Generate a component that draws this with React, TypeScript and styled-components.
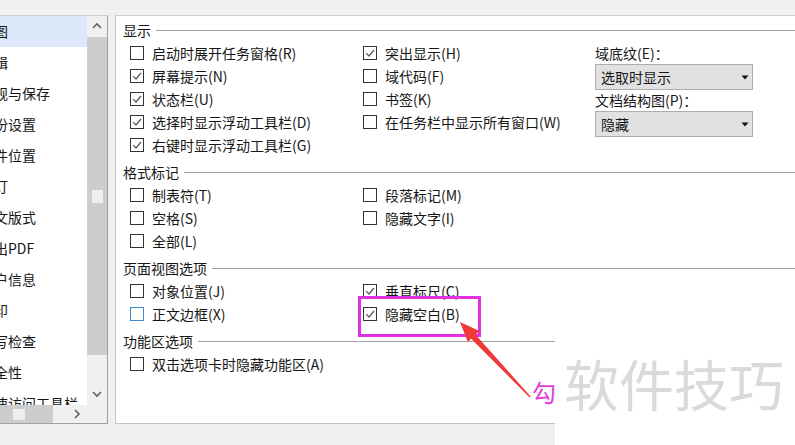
import styled, { createGlobalStyle } from 'styled-components';

const GlobalStyle = createGlobalStyle`
  html, body {
    margin: 0;
    padding: 0;
    background: #f0f0f0;
  }
  body {
    font-family: 'Noto Sans CJK SC', 'Liberation Sans', sans-serif;
  }
`;

const Window = styled.div`
  position: relative;
  box-sizing: border-box;
  width: 795px;
  height: 445px;
  padding-top: 15px;
  overflow: hidden;
  background: #f0f0f0;
  color: #161616;
  font-size: 14px;
`;

const Panes = styled.div`
  display: flex;
  gap: 7px;
  height: 409px;
`;

/* ---------- left navigation list ---------- */

const NavPane = styled.div`
  box-sizing: border-box;
  flex: none;
  width: 108px;
  display: grid;
  grid-template-columns: 87px 20px;
  grid-template-rows: 1fr 18px;
  background: #fff;
  border-top: 1px solid #cfcfcf;
  border-right: 1px solid #a0a0a0;
  border-bottom: 1px solid #a0a0a0;
`;

const NavViewport = styled.div`
  overflow: hidden;
`;

const NavList = styled.div`
  margin-left: -20px;
`;

const NavItem = styled.div<{ $selected?: boolean }>`
  height: 31px;
  line-height: 30px;
  white-space: nowrap;
  background: ${({ $selected }) => ($selected ? '#dde8fa' : 'transparent')};
`;

const VScroll = styled.div`
  display: flex;
  flex-direction: column;
  background: #f0f0f0;
`;

const ScrollBtn = styled.div<{ $wide?: boolean }>`
  flex: none;
  display: flex;
  align-items: center;
  justify-content: center;
  width: ${({ $wide }) => ($wide ? '21px' : 'auto')};
  height: ${({ $wide }) => ($wide ? 'auto' : '21px')};
`;

const VThumb = styled.div`
  flex: none;
  height: 318px;
  display: flex;
  align-items: center;
  justify-content: center;
  background: #cdcdcd;
`;

const Grip = styled.div<{ $w: number; $h: number }>`
  width: ${({ $w }) => $w}px;
  height: ${({ $h }) => $h}px;
  background: #efefef;
`;

const Track = styled.div`
  flex: 1;
`;

const HScroll = styled.div`
  display: flex;
  background: #f0f0f0;
`;

const HThumb = styled.div`
  flex: none;
  width: 53px;
  display: flex;
  align-items: center;
  padding-left: 13px;
  box-sizing: border-box;
  background: #cdcdcd;
`;

const Corner = styled.div`
  background: #f0f0f0;
`;

/* ---------- right options pane ---------- */

const OptionsPane = styled.div`
  flex: 1;
  box-sizing: border-box;
  padding: 4px 0 0 7px;
  background: #fff;
  border-top: 1px solid #cfcfcf;
  border-left: 1px solid #c4c4c4;
  border-bottom: 1px solid #c4c4c4;
`;

const Group = styled.section`
  margin-bottom: 6px;
`;

const GroupHead = styled.div`
  display: flex;
  align-items: center;
  gap: 5px;
  height: 21px;
  line-height: 21px;
`;

const HeadLine = styled.div`
  flex: 1;
  height: 1px;
  background: #a0a0a0;
`;

const GroupBody = styled.div`
  display: grid;
  grid-template-columns: 233px 232px 1fr;
  padding-left: 7px;
`;

const Column = styled.div`
  display: flex;
  flex-direction: column;
`;

const CheckRow = styled.label`
  display: flex;
  align-items: center;
  gap: 8px;
  height: 23px;
  white-space: nowrap;
`;

const Box = styled.span<{ $focus?: boolean }>`
  box-sizing: border-box;
  flex: none;
  width: 14px;
  height: 14px;
  display: flex;
  align-items: center;
  justify-content: center;
  background: #fff;
  border: 1px solid ${({ $focus }) => ($focus ? '#3c8ad4' : '#333')};
`;

const FieldLabel = styled.div`
  height: 21px;
  line-height: 21px;
  white-space: nowrap;
`;

const SideFields = styled.div`
  display: flex;
  flex-direction: column;
  margin-top: 2px;
`;

const Select = styled.div`
  box-sizing: border-box;
  width: 158px;
  height: 26px;
  display: flex;
  align-items: center;
  justify-content: space-between;
  padding: 0 3px 0 5px;
  background: #e1e1e1;
  border: 1px solid #adadad;
`;

/* ---------- annotations over the screenshot ---------- */

const Frame = styled.div`
  position: absolute;
  left: 358px;
  top: 296px;
  width: 123px;
  height: 41px;
  box-sizing: border-box;
  border: 3px solid #e030df;
`;

const ArrowSvg = styled.svg`
  position: absolute;
  left: 0;
  top: 0;
  pointer-events: none;
`;

const WatermarkBox = styled.div`
  position: absolute;
  left: 555px;
  top: 300px;
  right: 0;
  bottom: 0;
  background: #fff;
`;

const Watermark = styled.div`
  position: absolute;
  left: 9px;
  top: 54px;
  font-size: 55px;
  line-height: 56px;
  color: #dadada;
  white-space: nowrap;
`;

const Hook = styled.div`
  position: absolute;
  left: 532px;
  top: 377px;
  font-size: 24px;
  line-height: 30px;
  color: #e23ce0;
`;

const Check = () => (
  <svg width="12" height="12" viewBox="0 0 12 12">
    <path d="M2.2 6.2 L5 9 L10 3" fill="none" stroke="#555" strokeWidth="1.2" />
  </svg>
);

const Chevron = ({ dir }: { dir: 'up' | 'down' | 'right' }) => {
  const d =
    dir === 'up' ? 'M1 6 L5 2 L9 6' : dir === 'down' ? 'M1 2 L5 6 L9 2' : 'M3 1 L7 5 L3 9';
  return (
    <svg width="10" height="10" viewBox="0 0 10 10">
      <path d={d} fill="none" stroke="#606060" strokeWidth="1.6" />
    </svg>
  );
};

const Caret = () => (
  <svg width="8" height="5" viewBox="0 0 8 5">
    <path d="M0.5 0.5 L7.5 0.5 L4 4.5 Z" fill="#111" />
  </svg>
);

type Opt = { label: string; checked?: boolean; focus?: boolean };

function CheckItem({ label, checked, focus }: Opt) {
  return (
    <CheckRow>
      <Box $focus={focus}>{checked && <Check />}</Box>
      {label}
    </CheckRow>
  );
}

const navItems = [
  '视图',
  '编辑',
  '常规与保存',
  '备份设置',
  '文件位置',
  '修订',
  '中文版式',
  '输出PDF',
  '用户信息',
  '打印',
  '拼写检查',
  '安全性',
  '快速访问工具栏',
];

interface GroupDef {
  title: string;
  left: Opt[];
  right: Opt[];
  side?: boolean;
}

const groups: GroupDef[] = [
  {
    title: '显示',
    left: [
      { label: '启动时展开任务窗格(R)' },
      { label: '屏幕提示(N)', checked: true },
      { label: '状态栏(U)', checked: true },
      { label: '选择时显示浮动工具栏(D)', checked: true },
      { label: '右键时显示浮动工具栏(G)', checked: true },
    ],
    right: [
      { label: '突出显示(H)', checked: true },
      { label: '域代码(F)' },
      { label: '书签(K)' },
      { label: '在任务栏中显示所有窗口(W)' },
    ],
    side: true,
  },
  {
    title: '格式标记',
    left: [{ label: '制表符(T)' }, { label: '空格(S)' }, { label: '全部(L)' }],
    right: [{ label: '段落标记(M)' }, { label: '隐藏文字(I)' }],
  },
  {
    title: '页面视图选项',
    left: [{ label: '对象位置(J)' }, { label: '正文边框(X)', focus: true }],
    right: [
      { label: '垂直标尺(C)', checked: true },
      { label: '隐藏空白(B)', checked: true },
    ],
  },
  {
    title: '功能区选项',
    left: [{ label: '双击选项卡时隐藏功能区(A)' }],
    right: [],
  },
];

export default function App() {
  return (
    <>
      <GlobalStyle />
      <Window>
        <Panes>
          <NavPane>
            <NavViewport>
              <NavList>
                {navItems.map((item, i) => (
                  <NavItem key={item} $selected={i === 0}>
                    {item}
                  </NavItem>
                ))}
              </NavList>
            </NavViewport>
            <VScroll>
              <ScrollBtn>
                <Chevron dir="up" />
              </ScrollBtn>
              <VThumb>
                <Grip $w={11} $h={13} />
              </VThumb>
              <Track />
              <ScrollBtn>
                <Chevron dir="down" />
              </ScrollBtn>
            </VScroll>
            <HScroll>
              <HThumb>
                <Grip $w={12} $h={11} />
              </HThumb>
              <Track />
              <ScrollBtn $wide>
                <Chevron dir="right" />
              </ScrollBtn>
            </HScroll>
            <Corner />
          </NavPane>

          <OptionsPane>
            {groups.map((g) => (
              <Group key={g.title}>
                <GroupHead>
                  {g.title}
                  <HeadLine />
                </GroupHead>
                <GroupBody>
                  <Column>
                    {g.left.map((o) => (
                      <CheckItem key={o.label} {...o} />
                    ))}
                  </Column>
                  <Column>
                    {g.right.map((o) => (
                      <CheckItem key={o.label} {...o} />
                    ))}
                  </Column>
                  {g.side && (
                    <SideFields>
                      <FieldLabel>域底纹(E)：</FieldLabel>
                      <Select>
                        选取时显示
                        <Caret />
                      </Select>
                      <FieldLabel>文档结构图(P)：</FieldLabel>
                      <Select>
                        隐藏
                        <Caret />
                      </Select>
                    </SideFields>
                  )}
                </GroupBody>
              </Group>
            ))}
          </OptionsPane>
        </Panes>

        <Frame />
        <WatermarkBox>
          <Watermark>软件技巧</Watermark>
        </WatermarkBox>
        <ArrowSvg width="795" height="445" viewBox="0 0 795 445">
          <polygon
            points="460,322 479.5,331 475.6,334.8 530.6,396.4 529.6,397.4 471.2,338.8 467.8,342.1"
            fill="#f03a3a"
          />
        </ArrowSvg>
        <Hook>勾</Hook>
      </Window>
    </>
  );
}
